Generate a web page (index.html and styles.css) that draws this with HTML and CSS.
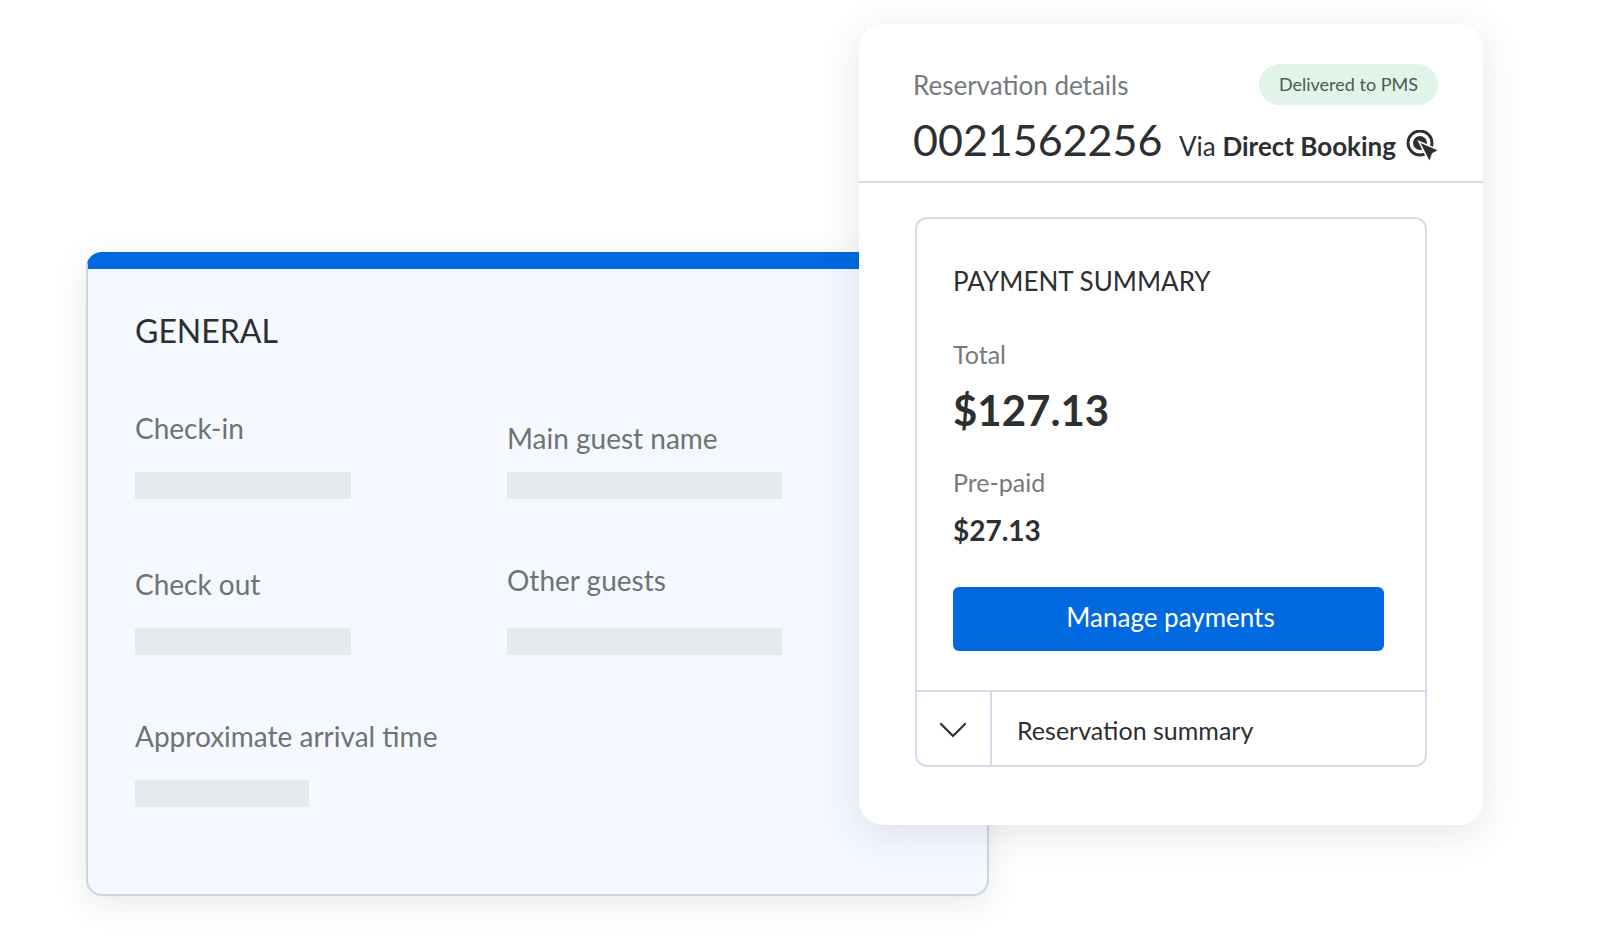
FILE: index.html
```html
<!DOCTYPE html>
<html lang="en">
<head>
    <meta charset="UTF-8">
    <meta name="viewport" content="width=device-width, initial-scale=1.0">
    <title>Reservation details</title>
    <link rel="stylesheet" href="styles.css">
</head>
<body>
    <main class="page">
        <section class="general">
            <h2 class="general-title">GENERAL</h2>
            <div class="fields">
                <div class="field">
                    <span class="label">Check-in</span>
                    <div class="placeholder"></div>
                </div>
                <div class="field field-near">
                    <span class="label">Main guest name</span>
                    <div class="placeholder placeholder-wide"></div>
                </div>
                <div class="field">
                    <span class="label">Check out</span>
                    <div class="placeholder"></div>
                </div>
                <div class="field field-far">
                    <span class="label">Other guests</span>
                    <div class="placeholder placeholder-wide"></div>
                </div>
                <div class="field">
                    <span class="label">Approximate arrival time</span>
                    <div class="placeholder placeholder-short"></div>
                </div>
            </div>
        </section>

        <section class="details">
            <header class="details-header">
                <div class="details-top">
                    <span class="caption">Reservation details</span>
                    <span class="badge">Delivered to PMS</span>
                </div>
                <div class="details-row">
                    <h1 class="number">0021562256</h1>
                    <div class="source">
                        <span>Via <strong>Direct Booking</strong></span>
                        <svg class="source-icon" viewBox="0 0 32 32" aria-hidden="true">
                            <circle cx="14" cy="13" r="12" fill="none" stroke="#2d3030" stroke-width="2.9"/>
                            <circle cx="14" cy="13" r="7" fill="#2d3030"/>
                            <path d="M14.5 13 L31.5 20.3 L26 23.3 L23.4 30.5 Z" fill="#2d3030" stroke="#fff" stroke-width="3" paint-order="stroke"/>
                        </svg>
                    </div>
                </div>
            </header>

            <div class="payment">
                <div class="payment-body">
                    <h2 class="payment-title">PAYMENT SUMMARY</h2>
                    <span class="caption caption-small">Total</span>
                    <strong class="total">$127.13</strong>
                    <span class="caption caption-small">Pre-paid</span>
                    <strong class="prepaid">$27.13</strong>
                    <button class="manage" type="button">Manage payments</button>
                </div>
                <div class="summary">
                    <button class="toggle" type="button" aria-labelledby="summary-label">
                        <svg class="chevron" viewBox="0 0 28 16" aria-hidden="true">
                            <path d="M2 2 L14 14 L26 2" fill="none" stroke="#2d3030" stroke-width="2.2" stroke-linecap="round" stroke-linejoin="round"/>
                        </svg>
                    </button>
                    <span class="summary-label" id="summary-label">Reservation summary</span>
                </div>
            </div>
        </section>
    </main>
</body>
</html>
```

FILE: styles.css
```css
* {
    box-sizing: border-box;
}
body {
    margin: 0;
    background-color: #fff;
    color: #2d3030;
    font-family: Lato, "Liberation Sans", sans-serif;
    font-size: 26px;
    line-height: 32px;
}
h1, h2 {
    margin: 0;
    font-weight: 400;
}
button {
    border: 0;
    font: inherit;
    cursor: pointer;
}

/* the two cards share the middle column, where they overlap */
.page {
    display: grid;
    grid-template-columns: 773fr 130fr 494fr;
    align-items: start;
    padding: 24px 117px 40px 86px;
}

.general {
    grid-area: 1 / 1 / 2 / 3;
    margin-top: 228px;
    padding: 42px 47px 87px;
    border: 2px solid #cbd5e4;
    border-top: 17px solid #0069df;
    border-radius: 16px;
    background-color: #f5f8ff;
    box-shadow: 0 8px 32px rgba(40, 50, 50, 0.1);
}
.general-title {
    font-size: 32px;
    line-height: 40px;
}
.fields {
    display: grid;
    grid-template-columns: 372px 1fr;
    row-gap: 63px;
    align-items: end;
    margin-top: 59px;
}
.field {
    display: flex;
    flex-direction: column;
    gap: 26px;
}
.field-near {
    gap: 16px;
}
.field-far {
    gap: 30px;
}
.label {
    color: #6e7373;
    font-size: 28px;
    line-height: 36px;
}
.placeholder {
    width: 216px;
    height: 27px;
    background-color: #e6eaec;
}
.placeholder-wide {
    width: 275px;
}
.placeholder-short {
    width: 174px;
}

.details {
    grid-area: 1 / 2 / 2 / 4;
    padding-bottom: 58px;
    border-radius: 24px;
    background-color: #fff;
    box-shadow: 0 8px 40px rgba(40, 50, 50, 0.12);
}
.details-header {
    padding: 40px 45px 15px 54px;
    border-bottom: 2px solid #d3dce8;
}
.details-top {
    display: flex;
    align-items: center;
    justify-content: space-between;
}
.caption {
    color: #757a7d;
}
.caption-small {
    font-size: 25px;
}
.badge {
    padding: 4px 20px 5px;
    border-radius: 21px;
    background-color: #e0f4e9;
    color: #4d5954;
    font-size: 18px;
}
.details-row {
    display: flex;
    align-items: baseline;
    justify-content: space-between;
    margin-top: 9px;
}
.number {
    font-size: 43px;
    line-height: 52px;
}
.source {
    display: flex;
    gap: 10px;
}
.source-icon {
    width: 32px;
    height: 32px;
}

.payment {
    margin: 34px 56px 0;
    border: 2px solid #d3dce8;
    border-radius: 12px;
}
.payment-body {
    display: flex;
    flex-direction: column;
    padding: 46px 41px 39px 36px;
}
.payment-title {
    margin-bottom: 41px;
    font-size: 26px;
}
.total {
    margin: 14px 0 30px;
    font-size: 42px;
    line-height: 52px;
}
.prepaid {
    margin: 14px 0 39px;
    font-size: 28px;
    line-height: 36px;
}
.manage {
    padding: 14px 16px 18px 20px;
    border-radius: 6px;
    background-color: #0069df;
    color: #fff;
}
.summary {
    display: flex;
    align-items: center;
    border-top: 2px solid #d3dce8;
}
.toggle {
    width: 75px;
    padding: 20px 24px 21px 22px;
    border-right: 2px solid #d3dce8;
    background: none;
}
.chevron {
    width: 28px;
    height: 16px;
}
.summary-label {
    padding: 2px 0 0 25px;
    font-size: 25px;
}
```
